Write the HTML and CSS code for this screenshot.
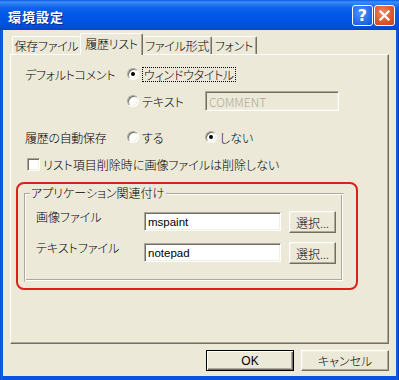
FILE: index.html
```html
<!DOCTYPE html>
<html lang="ja">
<head>
<meta charset="utf-8">
<title>環境設定</title>
<link rel="stylesheet" href="styles.css">
</head>
<body>
<div class="window">
  <div class="titlebar">
    <span class="title">環境設定</span>
    <div class="caption-buttons">
      <span class="cap-btn help">?</span>
      <span class="cap-btn close"><svg width="13" height="13" viewBox="0 0 13 13"><path d="M2.5 2.5 L10.5 10.5 M10.5 2.5 L2.5 10.5" stroke="#fff" stroke-width="2.2" stroke-linecap="square"/></svg></span>
    </div>
  </div>
  <div class="client">
    <div class="tabs">
      <div class="tab t1">保存ファイル</div>
      <div class="tab active t2">履歴リスト</div>
      <div class="tab t3">ファイル形式</div>
      <div class="tab t4">フォント</div>
    </div>
    <div class="panel">
      <div class="row row-a">
        <span class="lbl">デフォルトコメント</span>
        <span class="opt"><span class="radio checked"></span><span class="focus">ウィンドウタイトル</span></span>
      </div>
      <div class="row row-b">
        <span class="lbl"></span>
        <span class="opt"><span class="radio"></span><span class="otext">テキスト</span></span>
        <span class="textbox disabled">COMMENT</span>
      </div>
      <div class="row row-c">
        <span class="lbl">履歴の自動保存</span>
        <span class="opt"><span class="radio"></span><span class="otext">する</span></span>
        <span class="opt"><span class="radio checked"></span><span class="otext">しない</span></span>
      </div>
      <div class="row row-d">
        <span class="check"></span><span class="otext">リスト項目削除時に画像ファイルは削除しない</span>
      </div>
      <div class="highlight">
        <div class="group">
          <span class="legend">アプリケーション関連付け</span>
          <div class="grow first">
            <span class="glbl">画像ファイル</span>
            <span class="textbox edit">mspaint</span>
            <span class="btn small">選択...</span>
          </div>
          <div class="grow">
            <span class="glbl">テキストファイル</span>
            <span class="textbox edit">notepad</span>
            <span class="btn small">選択...</span>
          </div>
        </div>
      </div>
    </div>
    <div class="buttons">
      <span class="btn default"><span class="latin">OK</span></span>
      <span class="btn">キャンセル</span>
    </div>
  </div>
</div>
</body>
</html>
```

FILE: styles.css
```css
html, body {
  margin: 0;
  padding: 0;
}
body {
  width: 399px;
  height: 380px;
  overflow: hidden;
  font-family: "Noto Sans CJK JP", "Noto Sans", sans-serif;
  font-size: 12px;
  font-weight: 300;
  font-feature-settings: "palt";
  color: #000;
}
.window {
  width: 399px;
  height: 380px;
  background: linear-gradient(to right, #0842C8 0, #1660EA 1px, #0A53E0 3px, #0A53E0 396px, #1660EA 397px, #0831B8 399px);
  display: flex;
  flex-direction: column;
}
.titlebar {
  height: 30px;
  flex: none;
  display: flex;
  align-items: center;
  justify-content: space-between;
  padding: 0 4px 0 8px;
  box-sizing: border-box;
  background: linear-gradient(to bottom, #0A5CE8 0, #3D8FF7 2px, #2A7CF2 4px, #0E62EC 8px, #0058E8 14px, #0054E3 20px, #0050DC 26px, #0646C6 30px);
}
.title {
  color: #fff;
  font-weight: bold;
  font-size: 13px;
  letter-spacing: 1px;
  text-shadow: 1px 1px 0 #0A2A90;
  margin-top: 2px;
}
.caption-buttons {
  display: flex;
  gap: 1px;
  align-self: flex-start;
  margin-top: 5px;
}
.cap-btn {
  width: 21px;
  height: 21px;
  box-sizing: border-box;
  border: 1px solid #fff;
  border-radius: 3px;
  display: flex;
  align-items: center;
  justify-content: center;
}
.help {
  background: radial-gradient(circle at 40% 35%, #4F94FA 0, #2A6EF0 55%, #1A4FD0 100%);
  color: #fff;
  font-family: "DejaVu Sans", sans-serif;
  font-weight: bold;
  font-size: 16px;
  line-height: 1;
}
.close {
  background: radial-gradient(circle at 40% 35%, #F08A66 0, #E2582F 55%, #C83C16 100%);
}
.client {
  flex: 1;
  margin: 0 3px 4px 3px;
  background: #ECE9D8;
  padding: 3px 7px 5px 7px;
  display: flex;
  flex-direction: column;
}
.tabs {
  height: 21px;
  flex: none;
  display: flex;
  align-items: flex-end;
  padding-left: 2px;
  position: relative;
  z-index: 1;
}
.tab {
  height: 18px;
  box-sizing: border-box;
  border-top: 1px solid #fff;
  border-left: 1px solid #fff;
  border-right: 1px solid #716F64;
  box-shadow: inset -1px 0 0 #ACA899;
  border-radius: 2px 2px 0 0;
  line-height: 17px;
  text-align: center;
  background: #ECE9D8;
  white-space: nowrap;
  letter-spacing: -0.3px;
}
.t1 { width: 68px; border-right: none; box-shadow: none; }
.t2 { width: 63px; }
.t3 { width: 69px; border-left: none; }
.t4 { width: 45px; border-left: none; }
.tab.active {
  height: 22px;
  margin-bottom: -1px;
  line-height: 19px;
  padding-bottom: 2px;
}
.panel {
  height: 290px;
  flex: none;
  box-sizing: border-box;
  border-top: 1px solid #fff;
  border-left: 1px solid #fff;
  border-right: 1px solid #716F64;
  border-bottom: 1px solid #716F64;
  box-shadow: inset -1px -1px 0 #ACA899;
  display: flex;
  flex-direction: column;
}
.row {
  display: flex;
  align-items: center;
  height: 20px;
  margin-left: 14px;
}
.row-a { margin-top: 9px; }
.row-b { margin-top: 7px; }
.row-c { margin-top: 16px; }
.row-d { margin-top: 7px; margin-left: 16px; }
.lbl { width: 102px; flex: none; letter-spacing: -0.3px; }
.opt {
  width: 78px;
  flex: none;
  display: flex;
  align-items: center;
}
.radio {
  width: 12px;
  height: 12px;
  box-sizing: border-box;
  border-radius: 50%;
  border: 1px solid;
  border-color: #ACA899 #fff #fff #ACA899;
  box-shadow: inset 1px 1px 0 #716F64, inset -1px -1px 0 #F1EFE2;
  background: #fff;
  flex: none;
  display: flex;
  align-items: center;
  justify-content: center;
}
.radio.checked::after {
  content: "";
  width: 4px;
  height: 4px;
  border-radius: 50%;
  background: #000;
}
.otext { margin-left: 3px; white-space: nowrap; }
.focus {
  margin-left: 3px;
  padding: 0 1px;
  border: 1px dotted #000;
  line-height: 13px;
  white-space: nowrap;
  letter-spacing: -0.3px;
}
.check {
  width: 13px;
  height: 13px;
  box-sizing: border-box;
  border: 1px solid;
  border-color: #ACA899 #fff #fff #ACA899;
  box-shadow: inset 1px 1px 0 #716F64, inset -1px -1px 0 #F1EFE2;
  background: #fff;
  flex: none;
}
.textbox {
  box-sizing: border-box;
  border: 1px solid;
  border-color: #ACA899 #fff #fff #ACA899;
  box-shadow: inset 1px 1px 0 #716F64, inset -1px -1px 0 #F1EFE2;
  background: #fff;
  display: flex;
  align-items: center;
  padding-left: 3px;
  flex: none;
}
.textbox.disabled {
  width: 134px;
  height: 20px;
  background: #ECE9D8;
  color: #ACA899;
}
.highlight {
  margin-top: 8px;
  margin-left: 5px;
  width: 342px;
  height: 108px;
  box-sizing: border-box;
  border: 2px solid #DC1F1F;
  border-radius: 8px;
  padding: 9px 0 0 6px;
}
.group {
  width: 320px;
  height: 89px;
  box-sizing: border-box;
  border: 1px solid #ACA899;
  border-right-color: transparent;
  border-bottom-color: transparent;
  box-shadow: inset 1px 1px 0 #fff, inset -1px -1px 0 #fff, inset -2px -2px 0 #ACA899;
  padding-left: 11px;
  display: flex;
  flex-direction: column;
  align-items: flex-start;
}
.legend {
  margin-top: -8px;
  margin-left: -6px;
  padding: 0 2px 0 1px;
  line-height: 14px;
  background: #ECE9D8;
}
.grow {
  display: flex;
  align-items: flex-start;
  height: 22px;
  margin-top: 9px;
}
.grow.first { margin-top: 11px; }
.glbl {
  width: 108px;
  flex: none;
  line-height: 14px;
  margin-top: -1px;
}
.textbox.edit {
  width: 137px;
  height: 19px;
  margin-top: 1px;
  font-family: "Liberation Sans", sans-serif;
  font-size: 11.5px;
  font-weight: normal;
}
.btn {
  box-sizing: border-box;
  display: flex;
  align-items: center;
  justify-content: center;
  background: #ECE9D8;
  border: 1px solid;
  border-color: #fff #716F64 #716F64 #fff;
  box-shadow: inset -1px -1px 0 #ACA899, inset 1px 1px 0 #F1EFE2;
  white-space: nowrap;
}
.btn.small {
  width: 47px;
  height: 22px;
  margin-left: 8px;
}
.buttons {
  margin-top: 6px;
  height: 21px;
  display: flex;
  justify-content: flex-end;
  gap: 7px;
}
.buttons .btn {
  width: 88px;
  height: 21px;
}
.btn.default {
  border: 1px solid #000;
  box-shadow: inset 1px 1px 0 #fff, inset -1px -1px 0 #716F64, inset -2px -2px 0 #ACA899;
}
.latin {
  font-family: "Liberation Sans", sans-serif;
  font-size: 12px;
  font-weight: normal;
}
```
